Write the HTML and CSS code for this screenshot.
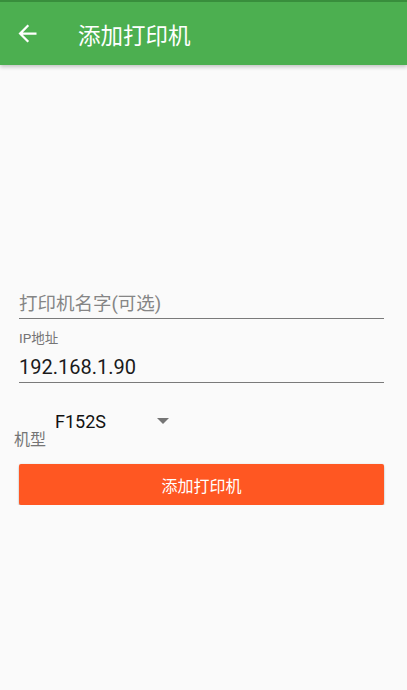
FILE: index.html
```html
<!DOCTYPE html>
<html lang="zh-CN">
<head>
  <meta charset="UTF-8" />
  <meta name="viewport" content="width=device-width, initial-scale=1.0" />
  <title>添加打印机</title>
  <link rel="stylesheet" href="styles.css">
</head>
<body>

  <div class="toolbar">
    <button class="back-btn" aria-label="返回">
      <svg viewBox="0 0 24 24" width="27" height="27">
        <path d="M20 11H7.83l5.59-5.59L12 4l-8 8 8 8 1.41-1.41L7.83 13H20v-2z" fill="#fff"/>
      </svg>
    </button>
    <div class="toolbar-title">添加打印机</div>
  </div>

  <div class="form">
    <input class="field" type="text" placeholder="打印机名字(可选)" />

    <label class="field-label">IP地址</label>
    <input class="field" type="text" value="192.168.1.90" />

    <div class="type-row">
      <div class="type-label">机型</div>
      <div class="spinner">
        <span class="spinner-text">F152S</span>
        <span class="spinner-arrow"></span>
      </div>
    </div>

    <button class="add-btn">添加打印机</button>
  </div>

</body>
</html>
```

FILE: styles.css
```css
* {
  box-sizing: border-box;
}
html, body {
  margin: 0;
  padding: 0;
  background: #fafafa;
  font-family: Roboto, "Noto Sans CJK SC", sans-serif;
  color: #1a1a1a;
}
.toolbar {
  display: flex;
  align-items: center;
  gap: 37px;
  height: 65px;
  padding-left: 14px;
  background: #4caf50;
  border-top: 2px solid #388e3c;
  box-shadow: 0 2px 4px rgba(0, 0, 0, 0.22);
}
.back-btn {
  display: flex;
  padding: 0;
  border: none;
  background: none;
  cursor: pointer;
}
.toolbar-title {
  color: #fff;
  font-size: 22.5px;
}
.form {
  display: flex;
  flex-direction: column;
  padding: 223px 23px 0 19px;
}
.field {
  width: 100%;
  height: 31px;
  padding: 0;
  border: none;
  border-bottom: 1px solid #7a7a7a;
  background: transparent;
  font-family: Roboto, "Noto Sans CJK SC", sans-serif;
  font-size: 20px;
  color: #1a1a1a;
  outline: none;
}
.field::placeholder {
  color: #858585;
  font-size: 18.5px;
}
.field-label {
  margin-top: 10px;
  margin-bottom: 5px;
  font-size: 13.5px;
  line-height: 18px;
  color: #757575;
}
.type-row {
  display: flex;
  align-items: flex-start;
  margin-top: 27px;
  margin-left: -5px;
}
.type-label {
  margin-top: 18px;
  font-family: "Noto Sans CJK SC", sans-serif;
  font-size: 16px;
  line-height: 20px;
  color: #757575;
}
.spinner {
  display: flex;
  align-items: flex-start;
  width: 134px;
  padding-left: 9px;
}
.spinner-text {
  font-size: 18px;
  line-height: 24px;
  color: #111;
}
.spinner-arrow {
  margin: 8px 11px 0 auto;
  border-left: 6px solid transparent;
  border-right: 6px solid transparent;
  border-top: 6px solid #757575;
}
.add-btn {
  margin-top: 16px;
  height: 41px;
  border: none;
  border-radius: 2px;
  background: #ff5722;
  color: #fff;
  font-family: "Noto Sans CJK SC", sans-serif;
  font-size: 16px;
  box-shadow: 0 2px 2px rgba(0, 0, 0, 0.24), 0 0 2px rgba(0, 0, 0, 0.12);
  cursor: pointer;
}
```
